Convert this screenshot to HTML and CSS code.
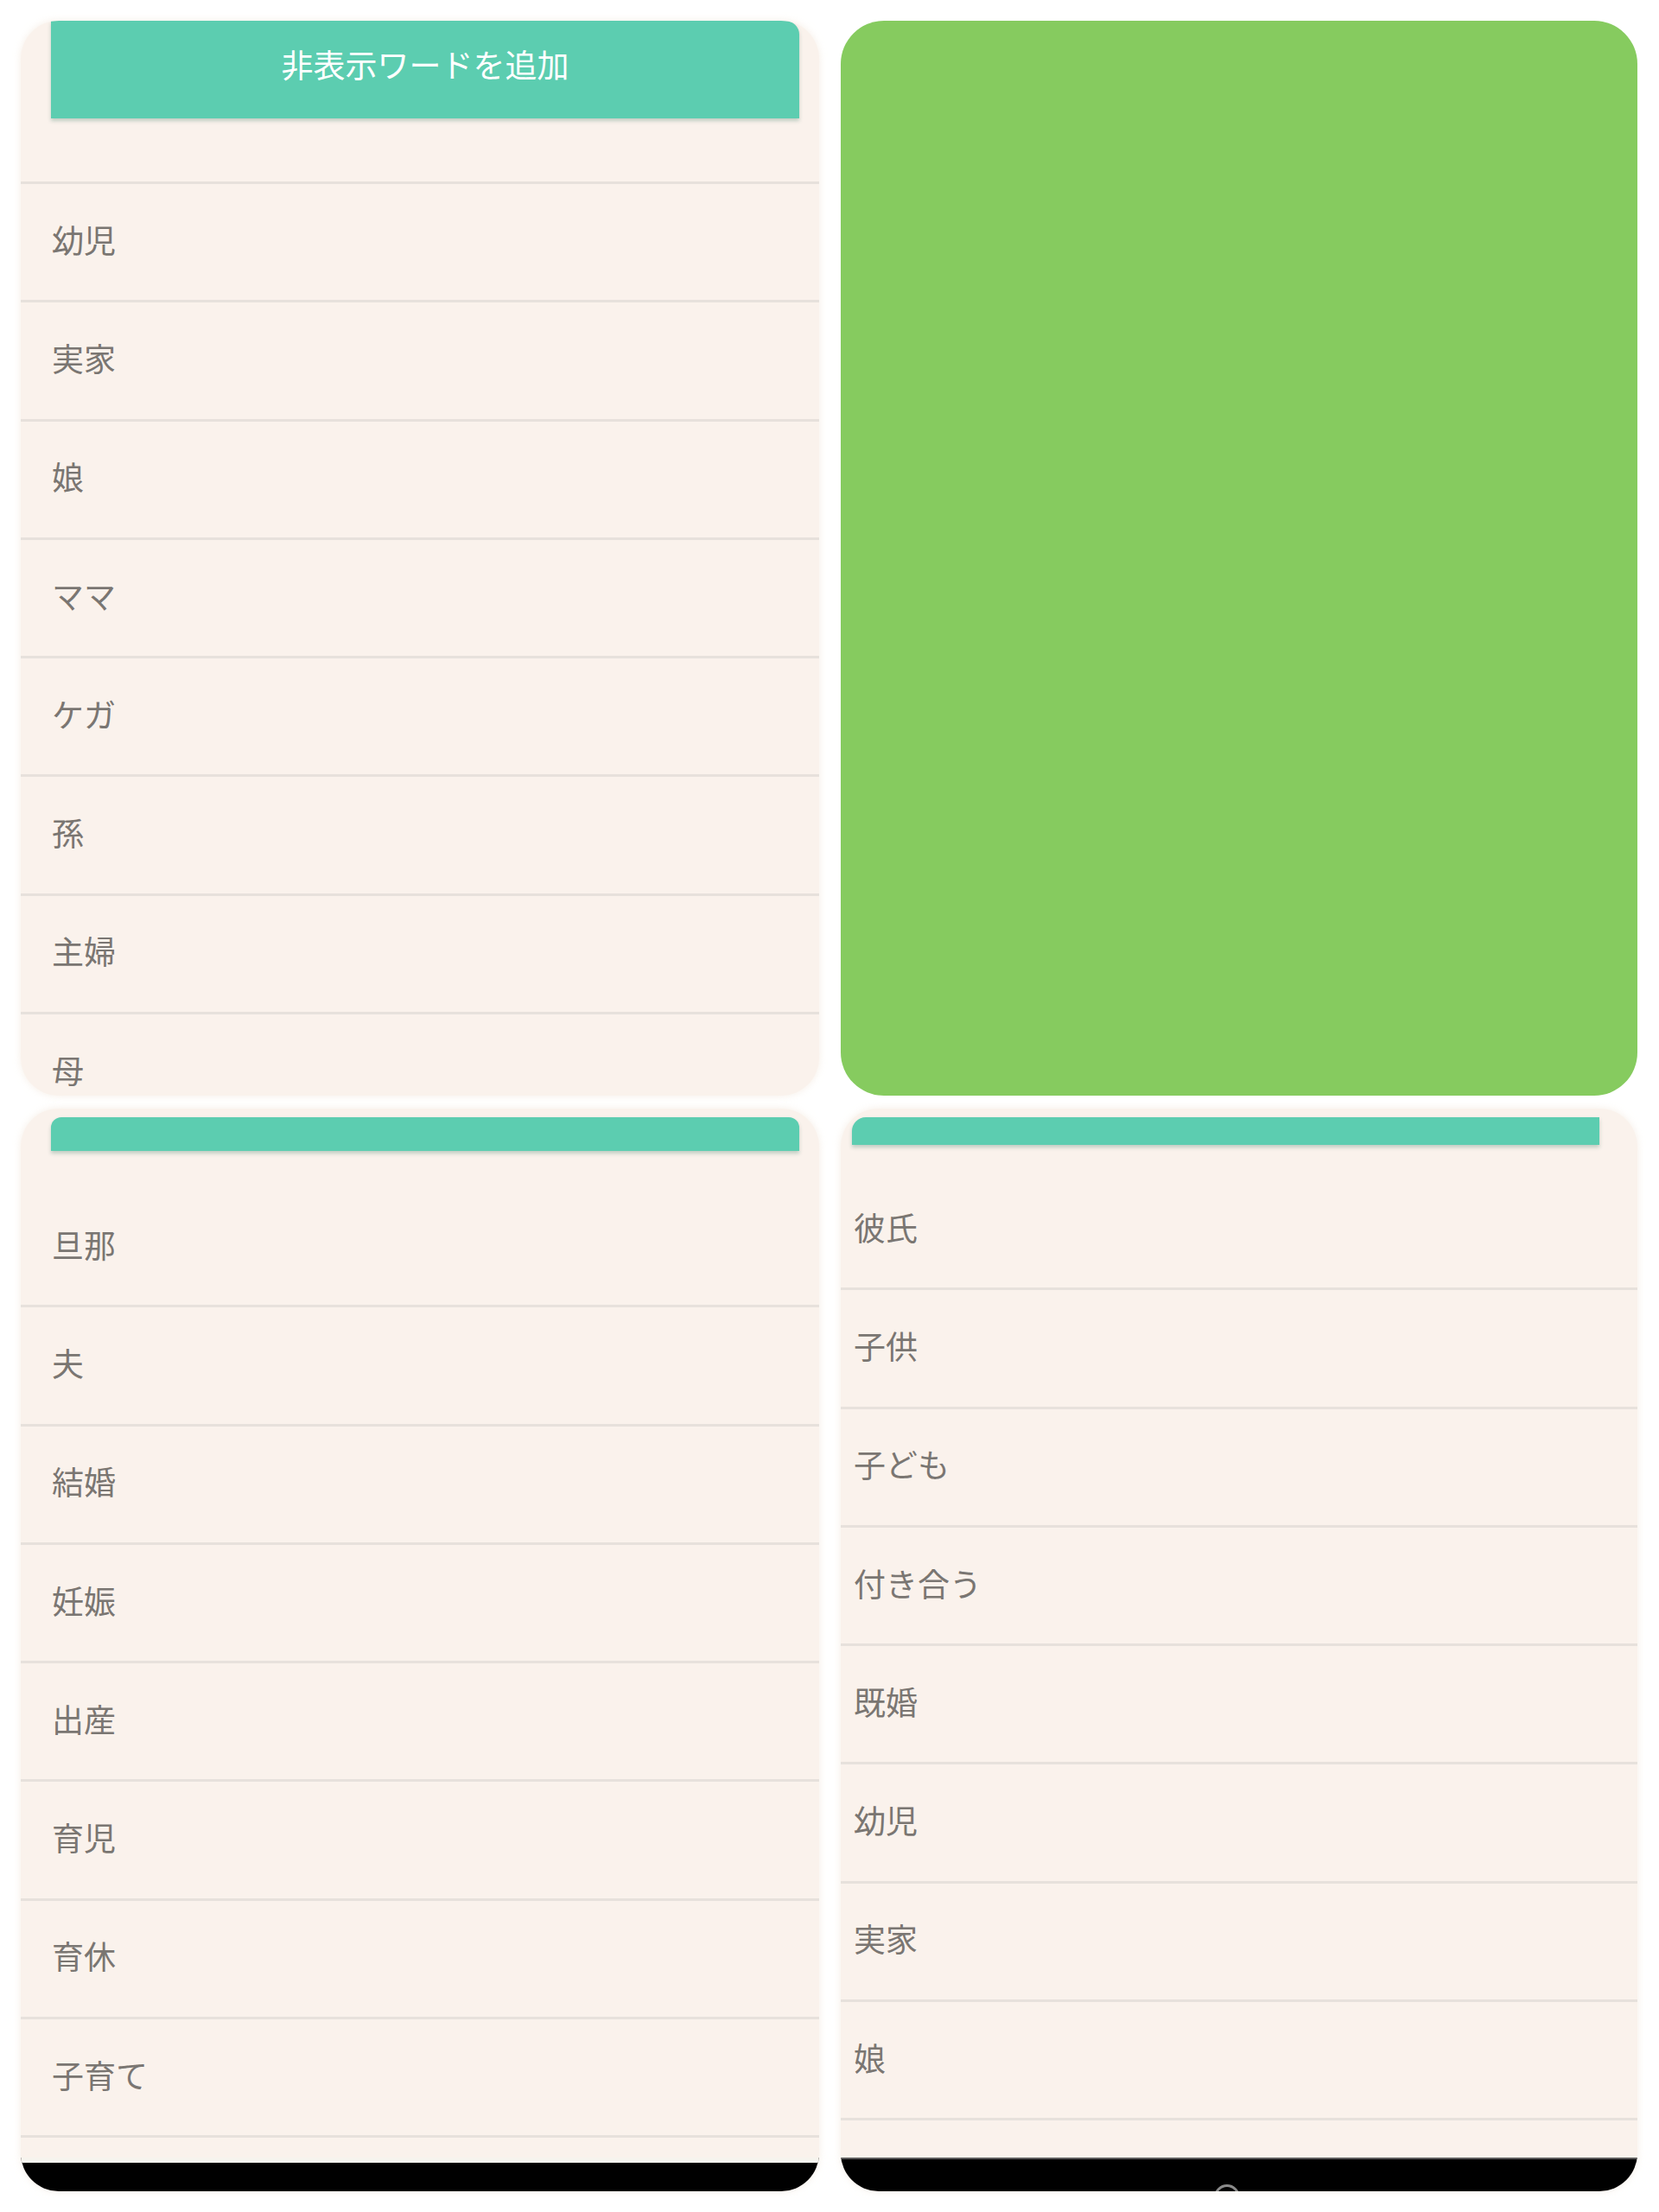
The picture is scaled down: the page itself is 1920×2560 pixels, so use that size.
FILE: index.html
```html
<!DOCTYPE html>
<html lang="ja">
<head>
<meta charset="utf-8">
<title>非表示ワード</title>
<link rel="stylesheet" href="styles.css">
</head>
<body>
<div class="grid">
  <section class="panel panel-tl">
    <div class="add-btn">非表示ワードを追加</div>
    <ul class="list">
      <li class="item">幼児</li>
      <li class="item">実家</li>
      <li class="item">娘</li>
      <li class="item">ママ</li>
      <li class="item">ケガ</li>
      <li class="item">孫</li>
      <li class="item">主婦</li>
      <li class="item">母</li>
    </ul>
  </section>
  <section class="panel panel-green"></section>
  <section class="panel panel-bl">
    <div class="bar bar-bl"></div>
    <ul class="list list-bl">
      <li class="item first">旦那</li>
      <li class="item">夫</li>
      <li class="item">結婚</li>
      <li class="item">妊娠</li>
      <li class="item">出産</li>
      <li class="item">育児</li>
      <li class="item">育休</li>
      <li class="item">子育て</li>
      <li class="item"></li>
    </ul>
    <div class="nav nav-bl"></div>
  </section>
  <section class="panel panel-br">
    <div class="bar bar-br"></div>
    <ul class="list list-br">
      <li class="item first">彼氏</li>
      <li class="item">子供</li>
      <li class="item">子ども</li>
      <li class="item">付き合う</li>
      <li class="item">既婚</li>
      <li class="item">幼児</li>
      <li class="item">実家</li>
      <li class="item">娘</li>
      <li class="item"></li>
    </ul>
    <div class="nav nav-br"><span class="home"></span></div>
  </section>
</div>
</body>
</html>
```

FILE: styles.css
```css
html, body {
  margin: 0;
  padding: 0;
  background: #ffffff;
}

body {
  width: 1920px;
  height: 2560px;
  font-family: "Noto Sans CJK JP", "Noto Sans", sans-serif;
  color: #7a7672;
  overflow: hidden;
}

.grid {
  display: grid;
  grid-template-columns: 924px 922px;
  grid-template-rows: 1244px 1253px;
  column-gap: 25px;
  row-gap: 15px;
  padding: 24px 0 0 24px;
}

.panel {
  background: #faf2ec;
  border-radius: 44px;
  overflow: hidden;
  display: flex;
  flex-direction: column;
  box-shadow: 0 0 8px rgba(240, 226, 212, 0.6);
}

.panel-green {
  background: #86cb5f;
  border-radius: 50px;
  box-shadow: none;
}

.add-btn {
  flex: none;
  height: 113px;
  margin: 0 23px 73px 35px;
  background: #5ccdb0;
  border-radius: 0 16px 0 0;
  color: #ffffff;
  font-size: 37px;
  line-height: 1;
  display: flex;
  align-items: center;
  justify-content: center;
  padding-bottom: 13px;
  box-sizing: border-box;
  box-shadow: 0 3px 4px rgba(60, 120, 100, 0.3);
}

.list {
  list-style: none;
  margin: 0;
  padding: 0;
  flex: 1;
  overflow: hidden;
}

.item {
  height: 137.3px;
  box-sizing: border-box;
  border-top: 3px solid #e7e1dc;
  padding-left: 36px;
  padding-bottom: 6px;
  display: flex;
  align-items: center;
  font-size: 37px;
  line-height: 1;
}

.item.first {
  border-top-color: transparent;
}

.bar {
  flex: none;
  background: #5ccdb0;
  box-shadow: 0 3px 4px rgba(60, 120, 100, 0.3);
}

.bar-bl {
  height: 39px;
  margin: 10px 23px 0 35px;
  border-radius: 12px 12px 0 0;
}

.list-bl {
  margin-top: 41px;
}

.bar-br {
  height: 32px;
  margin: 10px 44px 0 13px;
  border-radius: 16px 0 0 0;
}

.list-br {
  margin-top: 28px;
}

.list-br .item {
  padding-left: 15px;
}

.nav {
  flex: none;
  background: #000000;
  position: relative;
}

.nav-bl {
  height: 33px;
  border-top: 6px solid #f6f4ee;
}

.nav-br {
  height: 37px;
  border-top: 2px solid #5a5a5a;
}

.home {
  position: absolute;
  left: 432px;
  bottom: -22px;
  width: 30px;
  height: 30px;
  box-sizing: border-box;
  border: 3px solid #8a8a8a;
  border-radius: 50%;
}
```
